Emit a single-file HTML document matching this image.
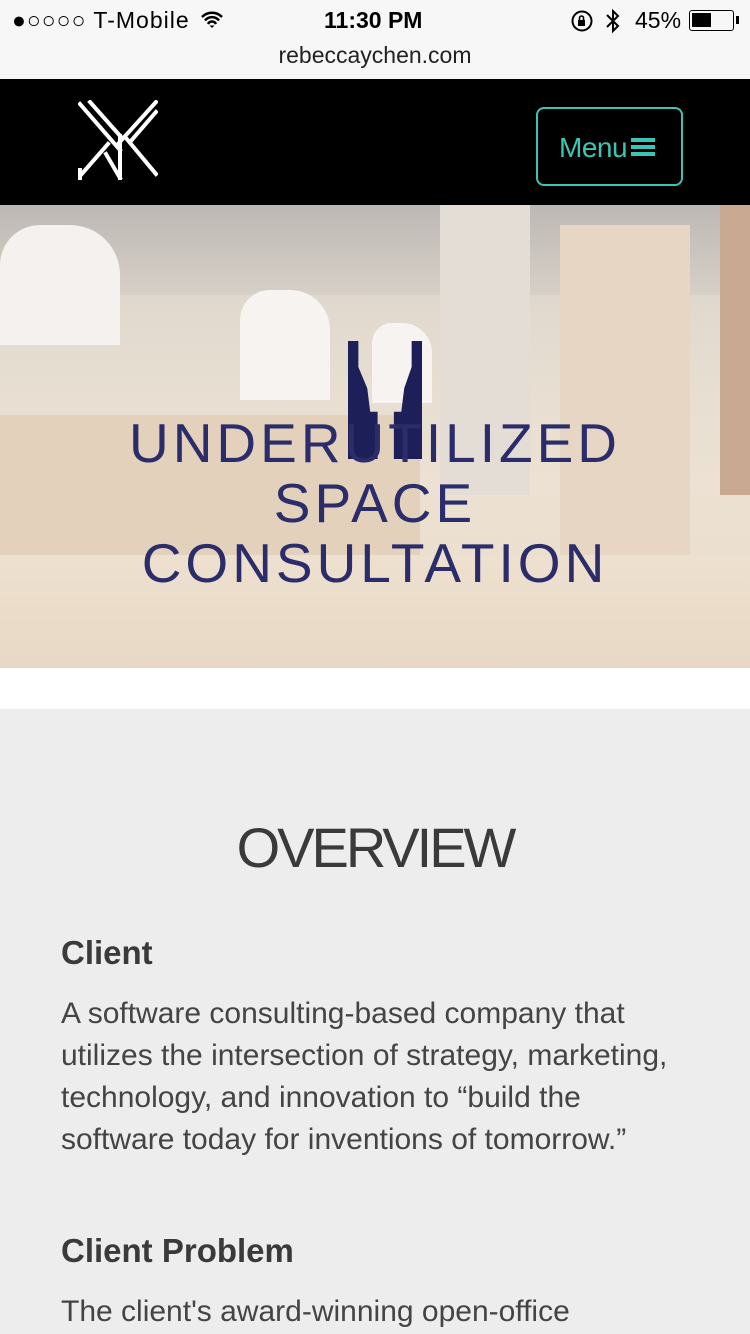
<!DOCTYPE html>
<html><head><meta charset="utf-8"><style>
*{margin:0;padding:0;box-sizing:border-box}
body{width:750px;height:1334px;overflow:hidden;font-family:"Liberation Sans",sans-serif;background:#fff;position:relative}
.status{position:absolute;top:0;left:0;width:750px;height:80px;background:#f7f7f7}
.status div{position:absolute;font-size:23px;color:#000}
.nav{position:absolute;top:79px;left:0;width:750px;height:126px;background:#000}
.menu{position:absolute;left:536px;top:28px;width:147px;height:79px;border:2px solid #3cc5b4;border-radius:8px;color:#3cc5b4;font-size:28px;padding:23px 0 0 21px;letter-spacing:-0.5px}
.menu span{display:inline-block;vertical-align:middle;width:24px;margin-left:4px;position:relative;top:-3px}
.menu span i{display:block;height:4px;background:#3cc5b4;margin:3px 0}
.hero{position:absolute;top:205px;left:0;width:750px;height:463px;overflow:hidden;
background:linear-gradient(180deg,#d8d2ca 0%,#e6ddd1 35%,#ece1d2 60%,#eadccb 100%)}
.hero .t{position:absolute;left:0;width:750px;text-align:center;color:#2a2d6a;font-size:55px;letter-spacing:4px;font-weight:300}
.gray{position:absolute;top:709px;left:0;width:750px;height:625px;background:#ededed}
h2{position:absolute;left:0;width:750px;text-align:center;top:815px;font-size:56px;font-weight:normal;color:#3a3a3a;letter-spacing:-3px}
h3{position:absolute;left:61px;font-size:33px;color:#3a3a3a;font-weight:bold}
p{position:absolute;left:61px;width:625px;font-size:30px;line-height:42px;color:#444}
</style></head><body>
<div class="status">
<div style="left:12px;top:7px;letter-spacing:1px">●○○○○ T-Mobile</div>
<svg style="position:absolute;left:200px;top:11px" width="24" height="18" viewBox="0 0 24 18"><path d="M2 6a14 14 0 0 1 20 0M5 9.5a9 9 0 0 1 14 0M8 13a4.5 4.5 0 0 1 8 0" stroke="#000" stroke-width="2.5" fill="none"/><path d="M9.5 14.5L12 17l2.5-2.5z" fill="#000"/></svg>
<div style="left:324px;top:7px;font-weight:bold">11:30 PM</div>
<svg style="position:absolute;left:570px;top:9px" width="24" height="24" viewBox="0 0 24 24"><circle cx="12" cy="12" r="9.5" stroke="#000" stroke-width="2" fill="none"/><rect x="8" y="11" width="7" height="6" fill="#000"/><path d="M9.5 11V9a2 2 0 0 1 4 0v2" stroke="#000" stroke-width="1.6" fill="none"/></svg>
<svg style="position:absolute;left:605px;top:8px" width="16" height="26" viewBox="0 0 16 26"><path d="M2 7l11 11-5 5V3l5 5L2 19" stroke="#000" stroke-width="2" fill="none"/></svg>
<div style="left:635px;top:7px">45%</div>
<div style="left:689px;top:10px;width:45px;height:21px;border:1.5px solid #000;border-radius:3px"><div style="position:absolute;left:2px;top:2px;width:19px;height:14px;background:#000"></div></div>
<div style="left:736px;top:16px;width:3px;height:8px;background:#000"></div>
<div style="left:0;width:750px;text-align:center;top:42px;font-size:23px;color:#222">rebeccaychen.com</div>
</div>
<div class="nav">
<svg style="position:absolute;left:78px;top:21px" width="80" height="80" viewBox="0 0 80 80">
<g stroke="#fff" stroke-width="4" fill="none" stroke-linecap="square">
<path d="M2 4 L42 50"/><path d="M12 2 L44 38"/>
<path d="M78 2 L40 44"/><path d="M78 12 L52 42"/>
<path d="M48 38 L78 74"/><path d="M42 36 L42 78"/>
<path d="M2 76 L30 44"/><path d="M2 78 L2 70"/><path d="M28 54 L42 78"/>
</g></svg>
<div class="menu">Menu<span><i></i><i></i><i></i></span></div>
</div>
<div class="hero">
<div style="position:absolute;left:0;top:0;width:750px;height:90px;background:linear-gradient(180deg,#bdb8b4,#d6d0c7)"></div>
<div style="position:absolute;left:440px;top:0;width:90px;height:290px;background:#e4ddd6"></div>
<div style="position:absolute;left:560px;top:20px;width:130px;height:330px;background:#e7d6c3"></div>
<div style="position:absolute;left:720px;top:0;width:30px;height:290px;background:#c9a991"></div>
<div style="position:absolute;left:0;top:210px;width:420px;height:140px;background:#e3d1bc"></div>
<div style="position:absolute;left:0;top:20px;width:120px;height:120px;background:#f4f1ee;border-radius:40px 50px 0 0"></div>
<div style="position:absolute;left:240px;top:85px;width:90px;height:110px;background:#f6f3f0;border-radius:30px 40px 0 0"></div>
<div style="position:absolute;left:372px;top:118px;width:60px;height:80px;background:#f6f3f0;border-radius:20px 30px 0 0"></div>
<div style="position:absolute;left:0;top:350px;width:750px;height:113px;background:linear-gradient(180deg,#eee0cf,#e8d8c5)"></div>
<div style="position:absolute;left:348px;top:136px;width:74px;height:118px;background:#1d1f58;clip-path:polygon(0 0,14% 0,14% 22%,26% 40%,30% 60%,40% 60%,40% 100%,0 100%,0 0,100% 0,100% 100%,62% 100%,62% 60%,72% 60%,76% 40%,86% 22%,86% 0)"></div>
<div class="t" style="top:206px">UNDERUTILIZED</div>
<div class="t" style="top:266px">SPACE</div>
<div class="t" style="top:326px">CONSULTATION</div>
</div>
<div class="gray"></div>
<h2>OVERVIEW</h2>
<h3 style="top:934px">Client</h3>
<p style="top:993px">A software consulting-based company that utilizes the intersection of strategy, marketing, technology, and innovation to “build the software today for inventions of tomorrow.”</p>
<h3 style="top:1232px">Client Problem</h3>
<p style="top:1291px">The client's award-winning open-office</p>
</body></html>
